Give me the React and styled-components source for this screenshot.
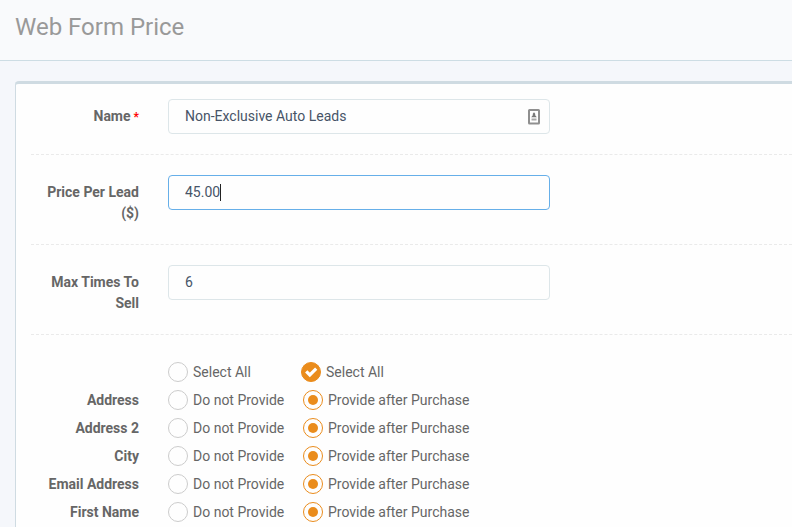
import React from 'react';

import styled, { createGlobalStyle } from 'styled-components';

const GlobalStyle = createGlobalStyle`
    * {
        box-sizing: border-box;
    }
    html {
        scrollbar-width: none;
    }
    body {
        margin: 0;
        background-color: #F5F7FB;
        color: #666666;
        font-family: Roboto, "Liberation Sans", sans-serif;
        font-size: 14px;
        line-height: 21px;
    }
`;

const Header = styled.header`
    padding: 12px 15px 18px;
    background-color: #F9FAFC;
    border-bottom: 1px solid #CDDDE4;
`;
const Title = styled.h1`
    margin: 0;
    color: #999999;
    font-size: 24px;
    font-weight: 400;
    line-height: 30px;
`;
const Panel = styled.form`
    margin: 20px 0 0 15px;
    padding: 15px 0 15px 15px;
    background-color: #FEFEFE;
    border-top: 3px solid #CFDBE2;
    border-left: 1px solid #CFDBE2;
    border-top-left-radius: 4px;
`;
const FormRow = styled.div`
    display: grid;
    grid-template-columns: 108px minmax(0, 382px);
    column-gap: 29px;
    padding-bottom: 20px;
    margin-bottom: 20px;
    border-bottom: 1px dashed #EAEAEA;
`;
const Label = styled.label`
    padding-top: 7px;
    font-weight: 700;
    text-align: right;
`;
const Required = styled.span`
    color: #FF0000;
    font-size: 12px;
`;
const Field = styled.div`
    position: relative;
    height: 35px;
`;
const TextInput = styled.input`
    width: 100%;
    height: 35px;
    padding: 5px 16px 7px;
    color: #475467;
    background-color: #FEFEFE;
    border: 1px solid ${p => p.$active ? '#66AFE9' : '#DDE6E9'};
    border-radius: 4px;
    font: inherit;
    caret-color: transparent;
    outline: none;
`;
const CaretLayer = styled.div`
    position: absolute;
    top: 9px;
    left: 17px;
    height: 17px;
    border-right: 1px solid #222222;
    pointer-events: none;
    span {
        visibility: hidden;
    }
`;
const FillIcon = styled.svg`
    position: absolute;
    top: 10px;
    right: 10px;
`;

const OptionList = styled.div`
    padding-top: 7px;
`;
const OptionRow = styled.div`
    display: grid;
    grid-template-columns: 108px minmax(0, 1fr);
    column-gap: 29px;
    margin-bottom: 8px;
    line-height: 20px;
`;
const OptionTitle = styled.span`
    font-weight: 700;
    text-align: right;
`;
const Options = styled.div`
    display: grid;
    grid-template-columns: ${p => p.$all ? 133 : 135}px 1fr;
`;
const Option = styled.label`
    display: flex;
    gap: 5px;
    white-space: nowrap;
`;
const RadioBox = styled.span`
    position: relative;
    width: 20px;
    height: 20px;
    svg {
        position: absolute;
        top: 0;
        left: 0;
        visibility: hidden;
        pointer-events: none;
    }
    input:checked + svg {
        visibility: visible;
    }
`;
const Radio = styled.input`
    appearance: none;
    display: block;
    width: 20px;
    height: 20px;
    margin: 0;
    background-color: #FEFEFE;
    border: 1px solid #CCCCCC;
    border-radius: 50%;
    &:checked {
        border-color: #EA8C1C;
        background-color: ${p => p.$filled ? '#EA8C1C' : '#FEFEFE'};
    }
    &:checked::before {
        content: "";
        display: ${p => p.$filled ? 'none' : 'block'};
        width: 10px;
        height: 10px;
        margin: 4px;
        border-radius: 50%;
        background-color: #EA8C1C;
    }
`;

const prices = [
    { id: 'name', label: 'Name', value: 'Non-Exclusive Auto Leads', required: true, fill: true },
    { id: 'price', label: 'Price Per Lead ($)', value: '45.00', active: true },
    { id: 'max', label: 'Max Times To Sell', value: '6' },
];

const leadFields = ['Address', 'Address 2', 'City', 'Email Address', 'First Name'];

const Check = () => (
    <svg width="20" height="20" viewBox="0 0 20 20" aria-hidden="true">
        <path d="M5.2 9.4l3.6 3.5 6.4-6.2" fill="none" stroke="#FFFFFF" strokeWidth="3.2" />
    </svg>
);

const ContactIcon = () => (
    <FillIcon width="12" height="16" viewBox="0 0 12 16" aria-hidden="true">
        <rect x="1" y="1" width="10" height="13.5" rx="0.5" fill="#FEFEFE" stroke="#8F8F8F" strokeWidth="2" />
        <path d="M6 3.2l1.2 1.6v1.4l1.6 2H3.2l1.6-2V4.8z" fill="#777777" />
        <path d="M3.5 10.5h5" stroke="#A8A8A8" strokeWidth="2" />
    </FillIcon>
);

const RadioOption = ({ name, text, value, checked, filled }) => (
    <Option>
        <RadioBox>
            <Radio type="radio" name={name} value={value} defaultChecked={checked} $filled={filled} />
            {filled && <Check />}
        </RadioBox>
        {text}
    </Option>
);

class PriceField extends React.Component {
    state = {
        value: this.props.field.value
    }

    render() {
        const { id, label, required, active, fill } = this.props.field;
        return (
            <FormRow>
                <Label htmlFor={id}>
                    {label}{required && <Required> *</Required>}
                </Label>
                <Field>
                    <TextInput
                        id={id}
                        type="text"
                        value={this.state.value}
                        $active={active}
                        onChange={e => this.setState({ value: e.target.value })}
                    />
                    {active && <CaretLayer aria-hidden="true"><span>{this.state.value}</span></CaretLayer>}
                    {fill && <ContactIcon />}
                </Field>
            </FormRow>
        );
    }
}

const App = () => (
    <>
        <GlobalStyle />
        <Header>
            <Title>Web Form Price</Title>
        </Header>
        <Panel>
            {prices.map(field => <PriceField key={field.id} field={field} />)}
            <OptionList>
                <OptionRow>
                    <OptionTitle />
                    <Options $all>
                        <RadioOption name="all" value="hide" text="Select All" filled />
                        <RadioOption name="all" value="provide" text="Select All" filled checked />
                    </Options>
                </OptionRow>
                {leadFields.map(title =>
                    <OptionRow key={title} role="radiogroup" aria-label={title}>
                        <OptionTitle>{title}</OptionTitle>
                        <Options>
                            <RadioOption name={title} value="hide" text="Do not Provide" />
                            <RadioOption name={title} value="provide" text="Provide after Purchase" checked />
                        </Options>
                    </OptionRow>
                )}
            </OptionList>
        </Panel>
    </>
);

export default App;
